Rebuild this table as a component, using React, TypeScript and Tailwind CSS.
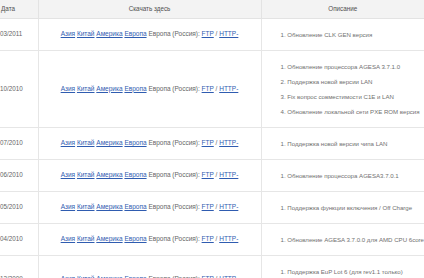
import React from 'react';

type Row = { date: string; notes: string[] };

const rows: Row[] = [
  { date: '03/2011', notes: ['Обновление CLK GEN версия'] },
  {
    date: '10/2010',
    notes: [
      'Обновление процессора AGESA 3.7.1.0',
      'Поддержка новой версии LAN',
      'Fix вопрос совместимости C1E и LAN',
      'Обновление локальной сети PXE ROM версия',
    ],
  },
  { date: '07/2010', notes: ['Поддержка новой версии чипа LAN'] },
  { date: '06/2010', notes: ['Обновление процессора AGESA3.7.0.1'] },
  { date: '05/2010', notes: ['Поддержка функции включения / Off Charge'] },
  { date: '04/2010', notes: ['Обновление AGESA 3.7.0.0 для AMD CPU 6core'] },
  { date: '12/2009', notes: ['Поддержка EuP Lot 6 (для rev1.1 только)', 'Обновление процессора AGESA 3.6.1.0'] },
];

const Links = () => (
  <span>
    <a className="text-[#2f5cb0] underline">Азия</a>{' '}
    <a className="text-[#2f5cb0] underline">Китай</a>{' '}
    <a className="text-[#2f5cb0] underline">Америка</a>{' '}
    <a className="text-[#2f5cb0] underline">Европа</a>{' '}
    Европа (Россия): <a className="text-[#2f5cb0] underline">FTP</a> /{' '}
    <a className="text-[#2f5cb0] underline">HTTP-</a>
  </span>
);

export default function App() {
  return (
    <div className="w-[424px] h-[278px] overflow-hidden bg-white font-['Liberation_Sans',Arial,sans-serif] text-[6.3px] text-[#666]">
      <table className="w-[424px] table-fixed border-collapse">
        <colgroup>
          <col className="w-[38px]" />
          <col className="w-[223px]" />
          <col />
        </colgroup>
        <thead>
          <tr className="h-[18px] bg-[#f3f3f3] text-[#505050]">
            <th className="border-b border-r border-[#e3e3e3] pl-[1px] font-normal text-left">Дата</th>
            <th className="border-b border-r border-[#e3e3e3] font-normal text-center">Скачать здесь</th>
            <th className="border-b border-[#e3e3e3] font-normal text-center">Описание</th>
          </tr>
        </thead>
        <tbody>
          {rows.map((row) => (
            <tr key={row.date} className="border-b border-[#e6e6e6]">
              <td className="border-r border-[#e6e6e6] pl-0 text-left align-middle">{row.date}</td>
              <td className="border-r border-[#e6e6e6] text-center align-middle text-[6.5px]">
                <Links />
              </td>
              <td className="py-[8px] pl-[19px] align-middle text-[6.1px] text-[#707070]">
                {row.notes.map((note, i) => (
                  <div key={i} className="leading-[15px] whitespace-nowrap">
                    {i + 1}. {note}
                  </div>
                ))}
              </td>
            </tr>
          ))}
        </tbody>
      </table>
    </div>
  );
}
